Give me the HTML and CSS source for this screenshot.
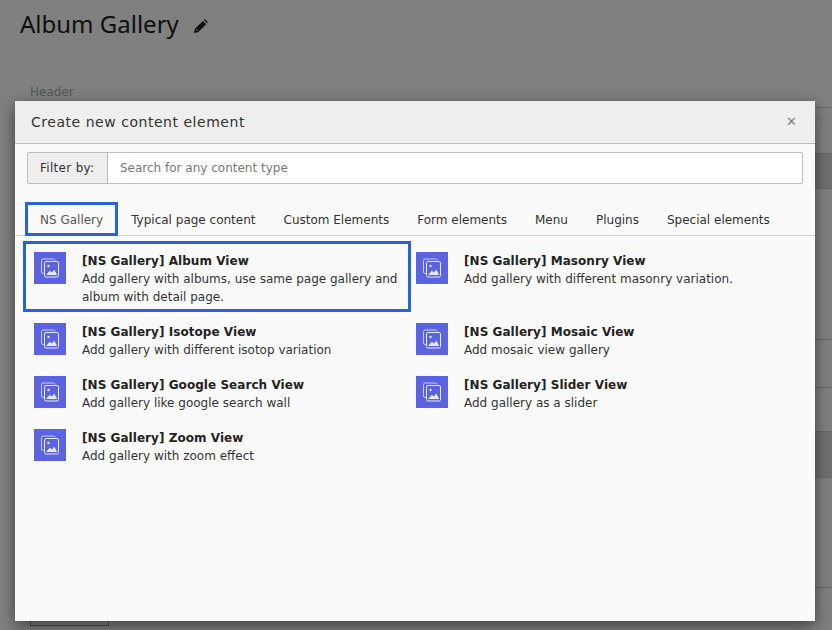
FILE: index.html
```html
<!DOCTYPE html>
<html lang="en">
<head>
    <meta charset="UTF-8">
    <meta name="viewport" content="width=device-width, initial-scale=1.0">
    <title>Album Gallery</title>
    <link rel="stylesheet" href="styles.css">
</head>
<body>
    <div class="page">
        <h1 class="page-title">Album Gallery
            <svg class="edit-icon" viewBox="0 0 16 16" width="15" height="15"><path d="M1 15l1-4.500L10.500 2l3.500 3.500L5.500 14z M11.500 1l1-1 3.500 3.500-1 1z" fill="#111"/><path d="M3.200 10.800l2 2" stroke="#808080" stroke-width="1"/></svg>
        </h1>
        <div class="field-label">Header</div>
        <!-- form rows behind the modal, only their ends show -->
        <div class="bg-row bg-row-1"></div>
        <div class="bg-row bg-row-2 bg-row-dark"></div>
        <div class="bg-row bg-row-3"></div>
        <div class="bg-row bg-row-4"></div>
        <div class="bg-row bg-row-5"></div>
        <div class="bg-row bg-row-6 bg-row-dark"></div>
        <div class="bg-row bg-row-7"></div>
        <div class="bg-row bg-row-8"><div class="bg-button"></div></div>
    </div>

    <div class="modal">
        <div class="modal-header">
            <span class="modal-title">Create new content element</span>
            <span class="modal-close">&#10005;</span>
        </div>
        <div class="modal-body">
            <div class="filter">
                <span class="filter-label">Filter by:</span>
                <span class="filter-input">Search for any content type</span>
            </div>

            <div class="tabs">
                <span class="tab tab-active">NS Gallery</span>
                <span class="tab">Typical page content</span>
                <span class="tab">Custom Elements</span>
                <span class="tab">Form elements</span>
                <span class="tab">Menu</span>
                <span class="tab">Plugins</span>
                <span class="tab">Special elements</span>
            </div>

            <div class="items">
                <div class="item item-active">
                    <svg class="item-icon" viewBox="0 0 32 32"><use href="#gallery"/></svg>
                    <div>
                        <div class="item-title">[NS Gallery] Album View</div>
                        <div class="item-text">Add gallery with albums, use same page gallery and album with detail page.</div>
                    </div>
                </div>
                <div class="item">
                    <svg class="item-icon" viewBox="0 0 32 32"><use href="#gallery"/></svg>
                    <div>
                        <div class="item-title">[NS Gallery] Masonry View</div>
                        <div class="item-text">Add gallery with different masonry variation.</div>
                    </div>
                </div>
                <div class="item">
                    <svg class="item-icon" viewBox="0 0 32 32"><use href="#gallery"/></svg>
                    <div>
                        <div class="item-title">[NS Gallery] Isotope View</div>
                        <div class="item-text">Add gallery with different isotop variation</div>
                    </div>
                </div>
                <div class="item">
                    <svg class="item-icon" viewBox="0 0 32 32"><use href="#gallery"/></svg>
                    <div>
                        <div class="item-title">[NS Gallery] Mosaic View</div>
                        <div class="item-text">Add mosaic view gallery</div>
                    </div>
                </div>
                <div class="item">
                    <svg class="item-icon" viewBox="0 0 32 32"><use href="#gallery"/></svg>
                    <div>
                        <div class="item-title">[NS Gallery] Google Search View</div>
                        <div class="item-text">Add gallery like google search wall</div>
                    </div>
                </div>
                <div class="item">
                    <svg class="item-icon" viewBox="0 0 32 32"><use href="#gallery"/></svg>
                    <div>
                        <div class="item-title">[NS Gallery] Slider View</div>
                        <div class="item-text">Add gallery as a slider</div>
                    </div>
                </div>
                <div class="item">
                    <svg class="item-icon" viewBox="0 0 32 32"><use href="#gallery"/></svg>
                    <div>
                        <div class="item-title">[NS Gallery] Zoom View</div>
                        <div class="item-text">Add gallery with zoom effect</div>
                    </div>
                </div>
            </div>
        </div>
    </div>

    <!-- shared gallery icon -->
    <svg class="icon-defs" width="0" height="0">
        <symbol id="gallery" viewBox="0 0 32 32">
            <rect width="32" height="32" fill="#5b63e0"/>
            <path d="M10.500 21.500H9a1.500 1.500 0 0 1-1.500-1.500V8.500A1.500 1.500 0 0 1 9 7h10.500a1.500 1.500 0 0 1 1.500 1.500" fill="none" stroke="#c9cdf6" stroke-width="1"/>
            <rect x="10.500" y="9.500" width="14" height="15.500" rx="1.500" fill="none" stroke="#e6e8fc" stroke-width="1"/>
            <circle cx="14.500" cy="14" r="1.200" fill="#e6e8fc"/>
            <path d="M12 23l3.800-4.200 2.200 1.800 2.200-3 3 5.400z" fill="#e6e8fc"/>
        </symbol>
    </svg>
</body>
</html>
```

FILE: styles.css
```css
* {
    margin: 0;
    padding: 0;
    box-sizing: border-box;
}

html, body {
    height: 100%;
    overflow: hidden;
}

body {
    font-family: "DejaVu Sans", Verdana, sans-serif;
    font-size: 12px;
    background-color: #808080;
    color: #222;
}

.page {
    padding: 6px 0 0 20px;
}

.page-title {
    font-family: "Noto Sans", "Open Sans", sans-serif;
    font-size: 24px;
    font-weight: 400;
    line-height: 36px;
    color: #0f0f0f;
}

.edit-icon {
    margin-left: 8px;
    vertical-align: -1px;
}

.field-label {
    margin: 43px 0 7px 10px;
    line-height: 15px;
    color: #555;
}

/* Background rows */
.bg-row {
    border-top: 1px solid #686868;
}

.bg-row-dark {
    background: #6f6f6f;
}

.bg-row-1 { height: 46px; }
.bg-row-2 { height: 35px; }
.bg-row-3 { height: 151px; }
.bg-row-4 { height: 48px; }
.bg-row-5 { height: 44px; }
.bg-row-6 { height: 46px; }
.bg-row-7 { height: 110px; }
.bg-row-8 { height: 43px; }

.bg-button {
    width: 79px;
    height: 35px;
    margin: 3px 0 0 10px;
    border: 1px solid #4d4d4d;
}

.icon-defs {
    position: absolute;
}

/* Modal */
.modal {
    position: absolute;
    top: 101px;
    left: 15px;
    width: 800px;
    height: 520px;
    background: #fafafa;
    box-shadow: 0 5px 15px rgba(0,0,0,0.5);
}

.modal-header {
    display: flex;
    justify-content: space-between;
    align-items: center;
    height: 43px;
    padding: 0 18px 0 16px;
    background: #eeeeee;
    border-bottom: 1px solid #b9b9b9;
}

.modal-title {
    font-size: 14px;
    letter-spacing: 0.53px;
    color: #333;
}

.modal-close {
    font-size: 13px;
    font-weight: bold;
    color: #808080;
    margin-top: -2px;
}

.modal-body {
    padding: 8px 0 0;
}

.filter {
    display: flex;
    height: 32px;
    margin: 0 12px;
    border: 1px solid #bbb;
    border-radius: 2px;
    background: #fff;
    line-height: 30px;
}

.filter-label {
    width: 80px;
    padding-left: 12px;
    background: #eeeeee;
    border-right: 1px solid #bbb;
    letter-spacing: 0.3px;
    color: #333;
}

.filter-input {
    padding-left: 12px;
    color: #777;
}

/* Tabs */
.tabs {
    display: flex;
    margin-top: 19px;
    padding-left: 11px;
    border-bottom: 1px solid #cfcfcf;
}

.tab {
    padding: 2px 14px 0;
    line-height: 30px;
    color: #333;
}

.tab-active {
    color: #555;
    outline: 3px solid #2b62d9;
    outline-offset: -2px;
}

/* Content elements */
.items {
    display: grid;
    grid-template-columns: 382px 382px;
    row-gap: 17px;
    padding: 16px 0 0 19px;
}

.item {
    display: flex;
    gap: 16px;
    line-height: 18px;
    padding-right: 12px;
}

.item-active {
    position: relative;
    margin-right: 15px;
    padding-right: 0;
}

.item-active::after {
    content: '';
    position: absolute;
    top: -11px;
    left: -11px;
    right: -10px;
    bottom: -6px;
    border: 3px solid #2b62d9;
}

.item-icon {
    flex-shrink: 0;
    width: 32px;
    height: 32px;
}

.item-title {
    font-weight: bold;
    letter-spacing: 0.05px;
    color: #222;
}

.item-text {
    color: #333;
}
```
